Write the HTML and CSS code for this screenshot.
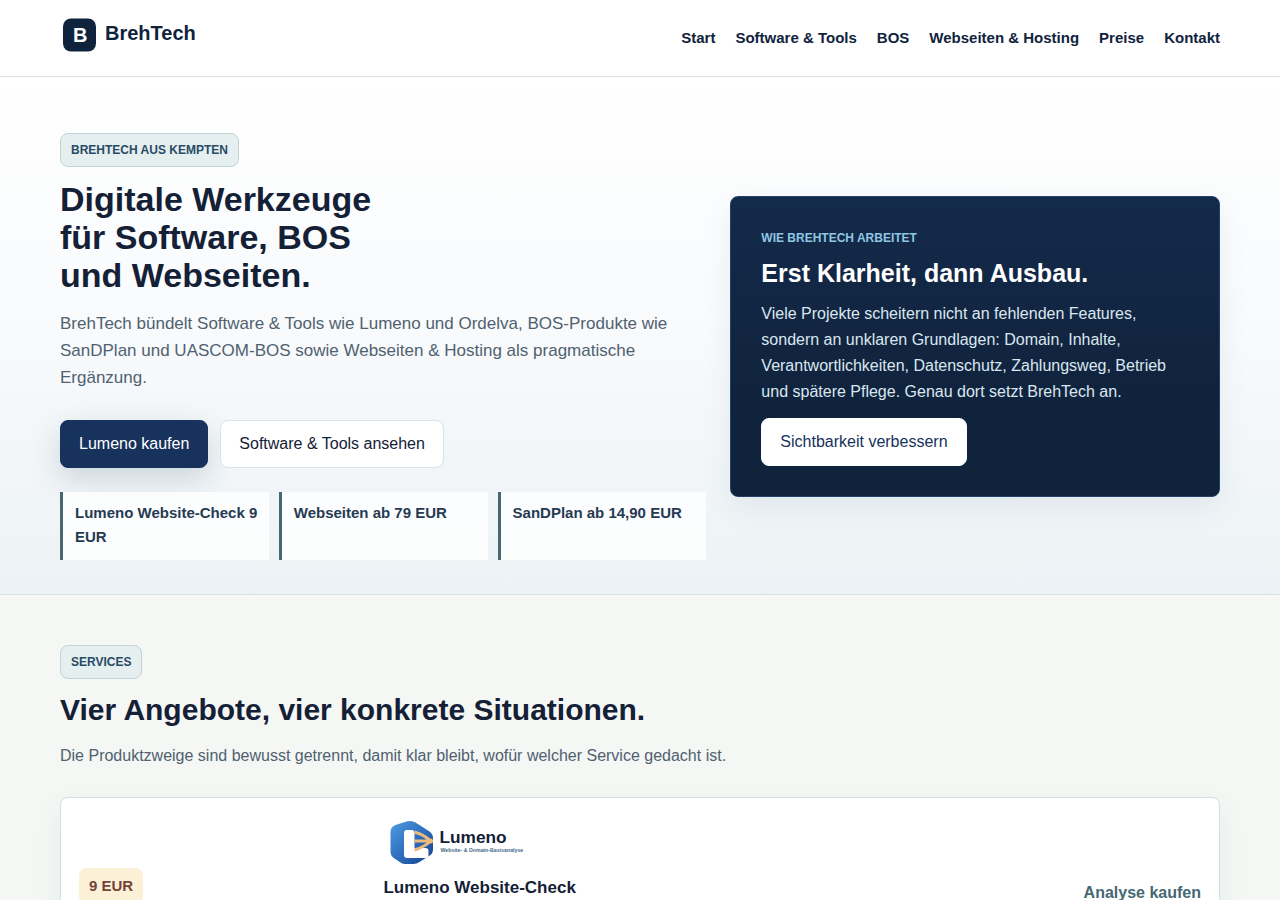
FILE: index.html
```html
<!DOCTYPE html>
<html lang="de">
<head>
<meta charset="utf-8">
<meta name="viewport" content="width=device-width, initial-scale=1">
<title>BrehTech</title>
<link rel="stylesheet" href="styles.css">
</head>
<body>
<header class="site-header">
  <div class="container header-row">
    <a class="brand" href="#" aria-label="BrehTech">
      <svg width="140" height="36" viewBox="0 0 140 36" aria-hidden="true">
        <rect x="3" y="1.5" width="33" height="33" rx="8" fill="#10233d"/>
        <text x="13" y="25" class="brand-letter">B</text>
        <text x="45" y="23" class="brand-name">BrehTech</text>
      </svg>
    </a>
    <nav class="nav" aria-label="Hauptnavigation">
      <a href="#">Start</a>
      <a href="#">Software &amp; Tools</a>
      <a href="#">BOS</a>
      <a href="#">Webseiten &amp; Hosting</a>
      <a href="#">Preise</a>
      <a href="#">Kontakt</a>
    </nav>
  </div>
</header>
<main>
  <section class="hero">
    <div class="container hero-grid">
      <div class="hero-copy">
        <span class="tag">BREHTECH AUS KEMPTEN</span>
        <h1>Digitale Werkzeuge<br>für Software, BOS<br>und Webseiten.</h1>
        <p class="lead">BrehTech bündelt Software &amp; Tools wie Lumeno und Ordelva, BOS-Produkte wie SanDPlan und UASCOM-BOS sowie Webseiten &amp; Hosting als pragmatische Ergänzung.</p>
        <div class="actions">
          <a class="button button-primary" href="#">Lumeno kaufen</a>
          <a class="button" href="#services">Software &amp; Tools ansehen</a>
        </div>
        <ul class="facts">
          <li>Lumeno Website-Check 9 EUR</li>
          <li>Webseiten ab 79 EUR</li>
          <li>SanDPlan ab 14,90 EUR</li>
        </ul>
      </div>
      <aside class="panel">
        <p class="panel-label">WIE BREHTECH ARBEITET</p>
        <h2>Erst Klarheit, dann Ausbau.</h2>
        <p class="panel-text">Viele Projekte scheitern nicht an fehlenden Features, sondern an unklaren Grundlagen: Domain, Inhalte, Verantwortlichkeiten, Datenschutz, Zahlungsweg, Betrieb und spätere Pflege. Genau dort setzt BrehTech an.</p>
        <a class="button button-light" href="#">Sichtbarkeit verbessern</a>
      </aside>
    </div>
  </section>
  <section class="services" id="services">
    <div class="container">
      <span class="tag">SERVICES</span>
      <h2>Vier Angebote, vier konkrete Situationen.</h2>
      <p class="intro">Die Produktzweige sind bewusst getrennt, damit klar bleibt, wofür welcher Service gedacht ist.</p>
      <article class="offer">
        <div class="offer-price"><span class="price">9 EUR</span></div>
        <div class="offer-body">
          <svg class="offer-logo" width="150" height="46" viewBox="0 0 600 184" role="img" aria-label="Lumeno Website- &amp; Domain-Basisanalyse">
            <defs>
              <linearGradient id="lumeno-blue" x1="0" y1="0" x2="1" y2="1">
                <stop offset="0" stop-color="#4f9ce0"/>
                <stop offset=".5" stop-color="#2f70c0"/>
                <stop offset="1" stop-color="#123f86"/>
              </linearGradient>
            </defs>
            <g transform="translate(2 0) scale(4)">
              <path d="M12 6L23 2.500Q28 1 32 3.500L46 12.500Q49.500 15 49.500 19V31Q49.500 34 47 36L36 43Q33 45 30 45H22Q19 45 17 43.500L9.500 38.500Q7 36.500 7 33V13Q7 8 12 6Z" fill="url(#lumeno-blue)"/>
              <path d="M20.500 14Q20.500 11 23.500 11H28Q31 11 31 14V29H42Q45 29 45 32V36Q45 39 42 39H23.500Q20.500 39 20.500 36Z" fill="#fff"/>
              <path d="M31 13Q41 16 47 22Q41 28 31 31M31 22H47" fill="none" stroke="#eabb7c" stroke-width="3"/>
              <circle cx="47" cy="22" r="2.500" fill="#f2bf78"/>
            </g>
            <text x="226" y="96" class="lumeno-name">Lumeno</text>
            <text x="230" y="132" class="lumeno-sub">Website- &amp; Domain-Basisanalyse</text>
          </svg>
          <h3>Lumeno Website-Check</h3>
        </div>
        <a class="offer-link" href="#">Analyse kaufen</a>
      </article>
    </div>
  </section>
</main>
</body>
</html>
```
FILE: styles.css
```css
* {
  box-sizing: border-box;
}

body {
  margin: 0;
  background: #f4f7f4;
  color: #142036;
  font-family: "Liberation Sans", Arial, sans-serif;
  font-size: 16px;
  line-height: 26px;
}

h1, h2, h3, p, ul {
  margin: 0;
}

a {
  color: inherit;
  text-decoration: none;
}

.container {
  width: calc(100% - 40px);
  max-width: 1160px;
  margin: 0 auto;
}

.site-header {
  background: #fff;
  border-bottom: 1px solid #d7e2e7;
}

.header-row {
  display: flex;
  align-items: center;
  justify-content: space-between;
  gap: 20px;
  padding: 17px 0 16px;
}

.brand {
  display: flex;
  padding-bottom: 7px;
}

.brand-letter,
.brand-name {
  font-size: 20px;
  font-weight: 700;
}

.brand-letter {
  fill: #fff;
}

.brand-name {
  fill: #10233d;
}

.nav {
  display: flex;
  flex-wrap: wrap;
  gap: 20px;
  padding-bottom: 2px;
  color: #10233d;
  font-size: 15px;
  font-weight: 700;
}

.hero {
  padding: 56px 0 34px;
  border-bottom: 1px solid #d4e2e6;
  background: linear-gradient(180deg, #fff 0%, #f8fafc 50%, #ecf2f5 100%);
}

.hero-grid {
  display: grid;
  grid-template-columns: 1.32fr 1fr;
  align-items: center;
  gap: 24px;
}

.tag {
  display: inline-block;
  padding: 3px 10px;
  border: 1px solid #c2d4d4;
  border-radius: 8px;
  background: #e6eff0;
  color: #2a4b66;
  font-size: 12px;
  font-weight: 700;
  vertical-align: top;
}

h1 {
  margin: 13px 0 16px;
  font-size: 34px;
  line-height: 38px;
}

.lead {
  color: #506170;
  font-size: 17px;
  line-height: 27px;
}

.actions {
  display: flex;
  flex-wrap: wrap;
  gap: 12px;
  margin: 29px 0 24px;
}

.button {
  display: inline-block;
  padding: 10px 18px;
  border: 1px solid #d7e2e7;
  border-radius: 8px;
  background: #fff;
}

.button-primary {
  border-color: #17325c;
  background: #17325c;
  color: #fff;
  box-shadow: 0 10px 30px rgba(20, 60, 80, 0.18);
}

.button-light {
  border-color: #fff;
  color: #17325c;
}

.facts {
  display: grid;
  grid-template-columns: repeat(3, 1fr);
  gap: 10px;
  padding: 0;
  list-style: none;
}

.facts li {
  padding: 9px 10px 11px 12px;
  border-left: 3px solid #456873;
  background: rgba(255, 255, 255, 0.8);
  color: #263b52;
  font-size: 15px;
  font-weight: 700;
  line-height: 24px;
}

.panel {
  padding: 30px;
  border: 1px solid #24416b;
  border-radius: 8px;
  background: linear-gradient(180deg, #142a4a 0%, #10233d 70%);
  color: #fff;
  box-shadow: 0 10px 30px rgba(20, 80, 90, 0.08);
}

.panel-label {
  color: #8fc6e2;
  font-size: 12px;
  font-weight: 700;
  line-height: 22px;
}

.panel h2 {
  margin: 9px 0 13px;
  font-size: 25px;
  line-height: 30px;
}

.panel-text {
  margin-bottom: 13px;
  color: #dbe7f0;
}

.services {
  padding: 50px 0;
}

.services h2 {
  margin: 14px 0 16px;
  font-size: 30px;
  line-height: 34px;
}

.intro {
  color: #506170;
}

.offer {
  display: grid;
  grid-template-columns: 0.42fr 1fr auto;
  align-items: center;
  gap: 18px;
  margin-top: 28px;
  padding: 18px;
  border: 1px solid #d3e0e6;
  border-radius: 8px;
  background: #fff;
  box-shadow: 0 10px 30px rgba(20, 80, 90, 0.06);
}

.offer-price {
  padding-bottom: 14px;
}

.price {
  display: inline-block;
  padding: 5px 10px;
  border-radius: 8px;
  background: #fcf0d7;
  color: #74443a;
  font-size: 15px;
  font-weight: 700;
  vertical-align: top;
}

.offer-body {
  padding-bottom: 69px;
}

.offer-logo {
  display: block;
  margin: 3px 0 10px;
}

.lumeno-name {
  fill: #142036;
  font-size: 69px;
  font-weight: 700;
}

.lumeno-sub {
  fill: #456a8a;
  font-size: 21px;
  font-weight: 700;
}

.offer h3 {
  font-size: 17px;
}

.offer-link {
  color: #456873;
  font-weight: 700;
}

@media (max-width: 860px) {
  .header-row {
    flex-wrap: wrap;
  }

  .hero-grid,
  .offer {
    grid-template-columns: 1fr;
  }
}
```
